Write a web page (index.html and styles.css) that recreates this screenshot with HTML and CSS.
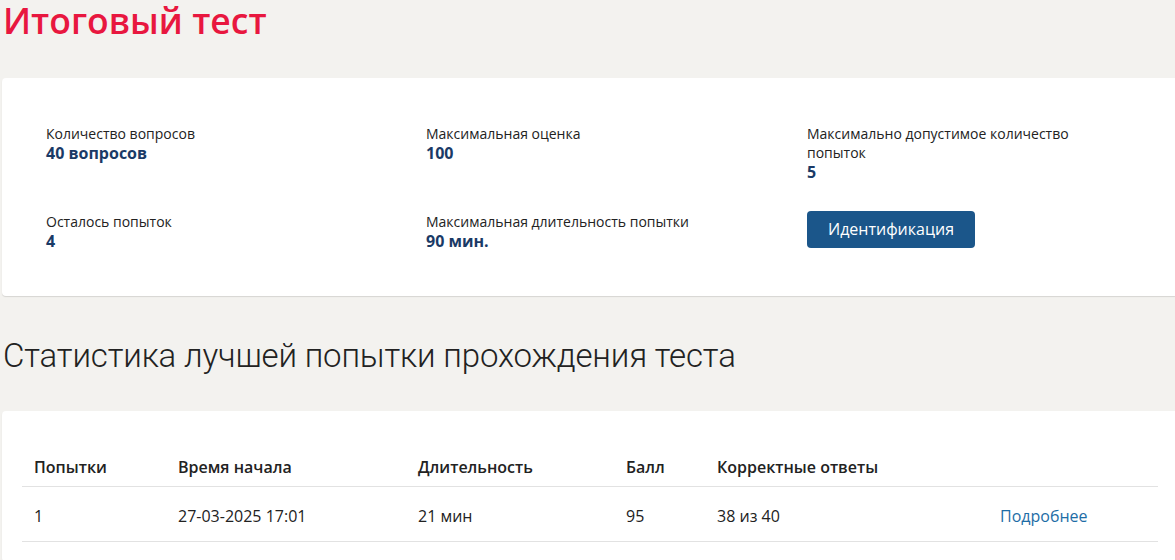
FILE: index.html
```html
<!DOCTYPE html>
<html lang="ru">
<head>
<meta charset="utf-8">
<title>Итоговый тест</title>
<link rel="stylesheet" href="styles.css">
</head>
<body>
<main class="page">
  <h1 class="title">Итоговый тест</h1>
  <section class="card info">
    <div class="info-grid">
      <div class="item">
        <div class="label">Количество вопросов</div>
        <div class="value">40 вопросов</div>
      </div>
      <div class="item">
        <div class="label">Максимальная оценка</div>
        <div class="value">100</div>
      </div>
      <div class="item">
        <div class="label">Максимально допустимое количество попыток</div>
        <div class="value">5</div>
      </div>
      <div class="item">
        <div class="label">Осталось попыток</div>
        <div class="value">4</div>
      </div>
      <div class="item">
        <div class="label">Максимальная длительность попытки</div>
        <div class="value">90 мин.</div>
      </div>
      <div class="item">
        <button class="btn" type="button">Идентификация</button>
      </div>
    </div>
  </section>
  <h2 class="subtitle">Статистика лучшей попытки прохождения теста</h2>
  <section class="card stats">
    <table class="table">
      <thead>
        <tr>
          <th class="c1">Попытки</th>
          <th class="c2">Время начала</th>
          <th class="c3">Длительность</th>
          <th class="c4">Балл</th>
          <th class="c5">Корректные ответы</th>
          <th class="c6"></th>
        </tr>
      </thead>
      <tbody>
        <tr>
          <td>1</td>
          <td>27-03-2025 17:01</td>
          <td>21 мин</td>
          <td>95</td>
          <td>38 из 40</td>
          <td><a class="link" href="#">Подробнее</a></td>
        </tr>
      </tbody>
    </table>
  </section>
</main>
</body>
</html>
```
FILE: styles.css
```css
html, body {
  margin: 0;
  padding: 0;
  background: #f3f2ef;
}
body {
  font-family: "Open Sans", "Noto Sans", sans-serif;
  color: #222;
}
.page {
  padding: 0 0 0 2px;
}
.title {
  margin: 0;
  padding: 0 0 0 1px;
  height: 78px;
  font-family: "Open Sans", sans-serif;
  font-weight: 600;
  font-size: 35.5px;
  line-height: 40px;
  color: #e8173f;
  letter-spacing: 0;
}
.card {
  background: #fff;
  border-radius: 4px 0 0 4px;
  box-shadow: 0 1px 1px rgba(0,0,0,0.12);
}
.info {
  height: 218px;
  box-sizing: border-box;
  padding: 46px 0 0 44px;
}
.info-grid {
  display: grid;
  grid-template-columns: 380px 381px 360px;
  row-gap: 20px;
  grid-template-rows: 68px auto;
}
.label {
  font-size: 14px;
  line-height: 19px;
  color: #222;
  max-width: 280px;
}
.value {
  font-size: 16px;
  line-height: 21px;
  font-weight: 700;
  color: #1a3a66;
}
.btn {
  margin-top: -1px;
  height: 37px;
  padding: 0 21px;
  background: #1b568a;
  color: #fff;
  border: 0;
  border-radius: 4px;
  font-family: "Open Sans", sans-serif;
  font-size: 16px;
  line-height: 37px;
}
.subtitle {
  margin: 0;
  padding: 40px 0 0 1px;
  height: 75px;
  box-sizing: border-box;
  font-family: "Roboto", sans-serif;
  font-weight: 300;
  font-size: 33px;
  line-height: 40px;
  color: #222;
  letter-spacing: -0.15px;
}
.stats {
  margin-top: 40px;
  padding: 37px 17px 20px 20px;
}
.table {
  width: 100%;
  border-collapse: collapse;
  font-size: 16px;
}
.table th {
  text-align: left;
  font-weight: 600;
  padding: 0 12px;
  height: 38px;
  vertical-align: middle;
  border-bottom: 1px solid #e2e2e2;
}
.table td {
  padding: 3px 12px 0;
  height: 51px;
  vertical-align: middle;
  border-bottom: 1px solid #e2e2e2;
}
.c1 { width: 120px; }
.c2 { width: 216px; }
.c3 { width: 184px; }
.c4 { width: 67px; }
.c5 { width: 259px; }
.link {
  color: #1d6da6;
  text-decoration: none;
}
```
